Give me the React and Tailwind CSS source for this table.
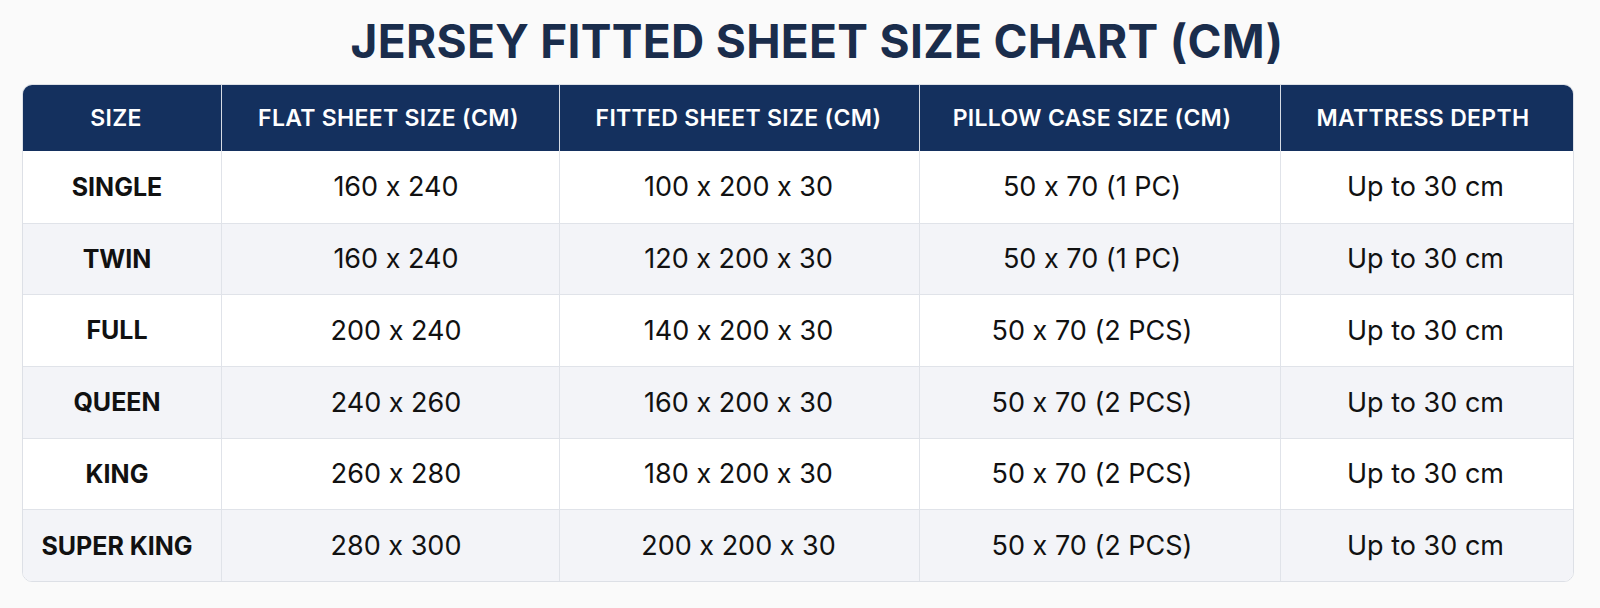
import React from "react";

const headers = ["SIZE", "FLAT SHEET SIZE (CM)", "FITTED SHEET SIZE (CM)", "PILLOW CASE SIZE (CM)", "MATTRESS DEPTH"];
const rows = [
  ["SINGLE", "160 x 240", "100 x 200 x 30", "50 x 70 (1 PC)", "Up to 30 cm"],
  ["TWIN", "160 x 240", "120 x 200 x 30", "50 x 70 (1 PC)", "Up to 30 cm"],
  ["FULL", "200 x 240", "140 x 200 x 30", "50 x 70 (2 PCS)", "Up to 30 cm"],
  ["QUEEN", "240 x 260", "160 x 200 x 30", "50 x 70 (2 PCS)", "Up to 30 cm"],
  ["KING", "260 x 280", "180 x 200 x 30", "50 x 70 (2 PCS)", "Up to 30 cm"],
  ["SUPER KING", "280 x 300", "200 x 200 x 30", "50 x 70 (2 PCS)", "Up to 30 cm"],
];
const widths = ["w-[198px]", "w-[338px]", "w-[360px]", "w-[361px]", "flex-1"];
const headPads = ["pr-[12px]", "pr-[4px]", "pr-[2px]", "pr-[16px]", "pr-[8px]"];
const bodyPads = ["pr-[10px]", "pl-[11px]", "pr-[2px]", "pr-[16px]", "pr-[3px]"];

export default function App() {
  return (
    <div className="w-[1600px] h-[608px] bg-[#fafafa] flex flex-col items-center [font-feature-settings:'calt'_0]" style={{ fontFamily: "Inter, 'Liberation Sans', sans-serif" }}>
      <h1 className="mt-[13px] h-[56px] text-[46px] leading-[56px] font-bold text-[#1a2d4c] tracking-[0.3px] ml-[34px]">
        JERSEY FITTED SHEET SIZE CHART (CM)
      </h1>
      <div className="mt-[15px] ml-[-4px] w-[1552px] rounded-[10px] border border-[#dde0e6] overflow-hidden bg-white">
        <div className="flex h-[66px] bg-[#14305e]">
          {headers.map((h, i) => (
            <div key={i} className={`${widths[i]} ${headPads[i]} flex items-center justify-center text-white text-[23px] font-semibold tracking-[0.3px] ${i > 0 ? "border-l border-[#d6dbe4]" : ""}`}>
              {h}
            </div>
          ))}
        </div>
        {rows.map((r, ri) => (
          <div key={ri} className={`flex h-[71.7px] ${ri > 0 ? "border-t border-[#e0e3e9]" : ""} ${ri % 2 === 1 ? "bg-[#f3f4f8]" : "bg-white"}`}>
            {r.map((c, ci) => (
              <div key={ci} className={`${widths[ci]} ${bodyPads[ci]} flex items-center justify-center pt-[1px] text-[#111] ${ci === 0 ? "text-[25px] font-bold" : "text-[27px] font-normal border-l border-[#e0e3e9]"}`}>
                {c}
              </div>
            ))}
          </div>
        ))}
      </div>
    </div>
  );
}
